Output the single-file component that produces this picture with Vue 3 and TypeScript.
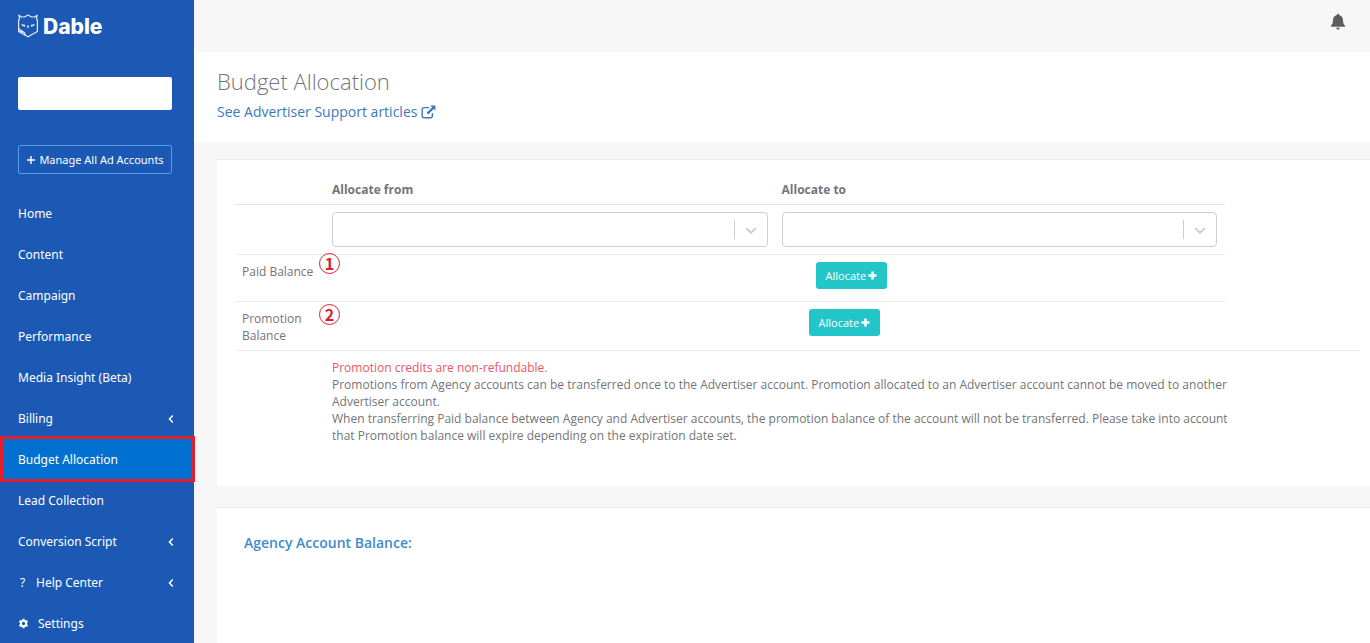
<script setup lang="ts">
import { ref } from 'vue'

interface NavItem {
  label: string
  icon?: 'help' | 'gear'
  expandable?: boolean
}

const navItems: NavItem[] = [
  { label: 'Home' },
  { label: 'Content' },
  { label: 'Campaign' },
  { label: 'Performance' },
  { label: 'Media Insight (Beta)' },
  { label: 'Billing', expandable: true },
  { label: 'Budget Allocation' },
  { label: 'Lead Collection' },
  { label: 'Conversion Script', expandable: true },
  { label: 'Help Center', icon: 'help', expandable: true },
  { label: 'Settings', icon: 'gear' },
]

const active = ref('Budget Allocation')
const account = ref('')
const from = ref('')
const to = ref('')
</script>

<template>
  <div class="layout">
    <aside class="sidebar">
      <a class="brand" href="#">
        <svg class="owl" viewBox="0 0 22 26" aria-hidden="true">
          <path d="M1.8 2.2 L4.6 4 H7.4 L11 2 L14.6 4 H17.4 L20.2 2.2 L19.4 5.2 L20.4 7.4 V18.4 L11 23.8 L1.6 18.4 V7.4 L2.6 5.2 Z" />
          <path d="M1.8 16 L7.4 19.4 L8.4 22.2 M1.8 18.4 L7.4 19.4" />
          <path class="face" d="M5 11.2 Q5.6 13 8.2 12.6 M17 11.2 Q16.4 13 13.8 12.6 M11 12.6 V14.8" />
        </svg>
        <span>Dable</span>
      </a>
      <input v-model="account" class="account" type="text" aria-label="Ad account" />
      <button class="manage" type="button">
        <svg viewBox="0 0 10 10" aria-hidden="true"><path d="M5 1V9M1 5H9" /></svg>
        Manage All Ad Accounts
      </button>
      <nav>
        <a
          v-for="item in navItems"
          :key="item.label"
          href="#"
          class="nav-item"
          :class="{ active: item.label === active }"
          @click.prevent="active = item.label"
        >
          <span v-if="item.icon === 'help'" class="lead">?</span>
          <svg v-if="item.icon === 'gear'" class="gear" viewBox="0 0 12 12" aria-hidden="true">
            <path
              fill-rule="evenodd"
              d="M4.9 .7H7.1L7.4 2.1L8.4 2.7L9.8 2.2L10.9 4.1L9.9 5.1V6.9L10.9 7.9L9.8 9.8L8.4 9.3L7.4 9.9L7.1 11.3H4.9L4.6 9.9L3.6 9.3L2.2 9.8L1.1 7.9L2.1 6.9V5.1L1.1 4.1L2.2 2.2L3.6 2.7L4.6 2.1ZM6 4.2A1.8 1.8 0 1 0 6 7.8A1.8 1.8 0 1 0 6 4.2Z"
            />
          </svg>
          <span>{{ item.label }}</span>
          <svg v-if="item.expandable" class="caret" viewBox="0 0 6 10" aria-hidden="true">
            <path d="M4.8 1.6 L1.5 5 L4.8 8.4" />
          </svg>
        </a>
      </nav>
    </aside>

    <main class="main">
      <header class="topbar">
        <button class="bell" type="button" aria-label="Notifications">
          <svg viewBox="0 0 16 18" aria-hidden="true">
            <path d="M8 .8C8.7 .8 9.1 1.3 9.1 2C11.5 2.6 12.9 4.6 13 7C13.1 10 13.5 11.2 15 12.6V13.8H1V12.6C2.5 11.2 2.9 10 3 7C3.1 4.6 4.5 2.6 6.9 2C6.9 1.3 7.3 .8 8 .8ZM6.2 14.8H9.8C9.7 16 9.1 16.6 8 16.6C6.9 16.6 6.3 16 6.2 14.8Z" />
          </svg>
        </button>
      </header>

      <section class="heading">
        <h1>Budget Allocation</h1>
        <a href="#">
          See Advertiser Support articles
          <svg viewBox="0 0 15 14" aria-hidden="true">
            <path class="box" d="M8.2 2.6H3.2Q1.2 2.6 1.2 4.6V10.8Q1.2 12.8 3.2 12.8H9.4Q11.4 12.8 11.4 10.8V8" />
            <path class="arrow" d="M9.2 .4H14.4V5.6L12.7 3.9L7.2 9.4L5.6 7.8L11.1 2.3Z" />
          </svg>
        </a>
      </section>

      <div class="panels">
        <section class="card">
          <table>
            <thead>
              <tr>
                <th class="label-col"></th>
                <th scope="col"><label for="from">Allocate from</label></th>
                <th scope="col"><label for="to">Allocate to</label></th>
              </tr>
            </thead>
            <tbody>
              <tr class="pick-row">
                <td></td>
                <td>
                  <div class="picker">
                    <select id="from" v-model="from"><option value=""></option></select>
                    <svg viewBox="0 0 12 8" aria-hidden="true"><path d="M1.2 1.2L6 5.8L10.8 1.2" /></svg>
                  </div>
                </td>
                <td>
                  <div class="picker">
                    <select id="to" v-model="to"><option value=""></option></select>
                    <svg viewBox="0 0 12 8" aria-hidden="true"><path d="M1.2 1.2L6 5.8L10.8 1.2" /></svg>
                  </div>
                </td>
              </tr>
              <tr class="balance-row">
                <th scope="row">Paid Balance<span class="mark">1</span></th>
                <td></td>
                <td class="paid">
                  <button class="allocate" type="button">
                    Allocate
                    <svg viewBox="0 0 10 10" aria-hidden="true"><path d="M5 .5V9.5M.5 5H9.5" /></svg>
                  </button>
                </td>
              </tr>
              <tr class="balance-row">
                <th scope="row">Promotion Balance<span class="mark low">2</span></th>
                <td></td>
                <td class="promo">
                  <button class="allocate" type="button">
                    Allocate
                    <svg viewBox="0 0 10 10" aria-hidden="true"><path d="M5 .5V9.5M.5 5H9.5" /></svg>
                  </button>
                </td>
              </tr>
            </tbody>
          </table>
          <div class="notes">
            <p class="warn">Promotion credits are non-refundable.</p>
            <p>Promotions from Agency accounts can be transferred once to the Advertiser account. Promotion allocated to an Advertiser account cannot be moved to another Advertiser account.</p>
            <p>When transferring Paid balance between Agency and Advertiser accounts, the promotion balance of the account will not be transferred. Please take into account that Promotion balance will expire depending on the expiration date set.</p>
          </div>
        </section>

        <section class="card agency">
          <h2>Agency Account Balance:</h2>
        </section>
      </div>
    </main>
  </div>
</template>

<style>
body {
  margin: 0;
}
</style>

<style scoped>
.layout {
  display: flex;
  height: 100vh;
  overflow: hidden;
  font-family: "Open Sans", "Noto Sans", sans-serif;
  font-size: 12px;
  color: #737577;
  background: #f7f7f7;
}
.layout * {
  box-sizing: border-box;
}
a {
  text-decoration: none;
}
button {
  font: inherit;
  cursor: pointer;
}

.sidebar {
  flex: none;
  width: 194px;
  background: #1b59b5;
}
.brand {
  display: flex;
  align-items: center;
  gap: 4px;
  height: 52px;
  padding: 0 17px;
  color: #fff;
  font-family: Inter, "Open Sans", sans-serif;
  font-size: 21px;
  font-weight: 800;
}
.owl {
  width: 22px;
  height: 26px;
  fill: none;
  stroke: #e4edfa;
  stroke-width: 1.2;
  stroke-linejoin: round;
}
.face {
  stroke-width: 1.6;
}
.account {
  display: block;
  width: calc(100% - 40px);
  height: 33px;
  margin: 25px 22px 35px 18px;
  border: 0;
  border-radius: 2px;
  background: #fff;
}
.manage {
  display: flex;
  align-items: center;
  justify-content: center;
  gap: 3px;
  width: calc(100% - 40px);
  height: 29px;
  margin: 0 22px 19px 18px;
  padding: 0;
  border: 1px solid #5c9aed;
  border-radius: 2px;
  background: transparent;
  color: #fff;
  font-family: "Noto Sans", sans-serif;
  font-size: 11px;
  white-space: nowrap;
}
.manage svg {
  width: 10px;
  height: 10px;
  fill: none;
  stroke: #fff;
  stroke-width: 1.4;
}
.nav-item {
  position: relative;
  display: flex;
  align-items: center;
  height: 41px;
  padding: 0 20px 0 18px;
  color: #fff;
  font-family: "Noto Sans", sans-serif;
  font-size: 12px;
}
.nav-item.active {
  background: #0270d0;
}
.nav-item.active::after {
  content: "";
  position: absolute;
  inset: -3px -1px -2px 0;
  border: 3px solid #e0202c;
}
.lead {
  width: 18px;
  padding-left: 2px;
}
.gear {
  width: 11px;
  height: 11px;
  margin-right: 9px;
  fill: #fff;
}
.caret {
  width: 6px;
  height: 10px;
  margin-left: auto;
  fill: none;
  stroke: #fff;
  stroke-width: 1.5;
}

.main {
  flex: 1;
  min-width: 0;
}
.topbar {
  display: flex;
  justify-content: flex-end;
  align-items: flex-start;
  height: 52px;
  padding: 13px 24px;
}
.bell {
  padding: 0;
  border: 0;
  background: none;
  line-height: 0;
}
.bell svg {
  width: 16px;
  height: 18px;
  fill: #5c5d5f;
}
.heading {
  height: 90px;
  padding: 13px 23px;
  background: #fff;
}
.heading h1 {
  margin: 0 0 5px;
  font-size: 22px;
  line-height: 32px;
  font-weight: 300;
}
.heading a {
  display: flex;
  align-items: center;
  gap: 4px;
  font-size: 14px;
  line-height: 20px;
  color: #4179b8;
}
.heading a svg {
  width: 15px;
  height: 14px;
}
.box {
  fill: none;
  stroke: #4179b8;
  stroke-width: 1.4;
}
.arrow {
  fill: #4179b8;
}

.panels {
  display: flex;
  flex-direction: column;
  gap: 21px;
  padding: 17px 0 0 23px;
}
.card {
  padding: 15px 10px 42px 19px;
  border-top: 1px solid #ebebec;
  background: #fff;
}
table {
  width: 88%;
  border-collapse: separate;
  border-spacing: 0;
  table-layout: fixed;
}
th,
td {
  padding: 6px 8px 6px 6px;
  border-bottom: 1px solid #ebebec;
  text-align: left;
  vertical-align: top;
  line-height: 17px;
}
thead th {
  border-bottom: 1px solid #e2e2e3;
}
tbody tr:last-child > * {
  border-bottom: 0;
}
.label-col {
  width: 90px;
}
.picker {
  position: relative;
}
.pick-row td {
  padding-top: 7px;
  padding-bottom: 7px;
}
.picker select {
  display: block;
  width: 100%;
  height: 35px;
  padding: 0 40px 0 8px;
  appearance: none;
  border: 1px solid #cfcfcf;
  border-radius: 4px;
  background: #fff;
  font: inherit;
}
.picker::after {
  content: "";
  position: absolute;
  top: 8px;
  bottom: 8px;
  right: 33px;
  width: 1px;
  background: #ccc;
  pointer-events: none;
}
.picker svg {
  position: absolute;
  right: 11px;
  top: 15px;
  width: 12px;
  height: 8px;
  fill: none;
  stroke: #c8c8c8;
  stroke-width: 1.8;
  pointer-events: none;
}
.balance-row th {
  position: relative;
  font-weight: 400;
  padding: 8px 0 6px 6px;
}
.balance-row td {
  padding-top: 7px;
  padding-bottom: 12px;
}
.balance-row .paid {
  padding-left: 40px;
}
.balance-row .promo {
  padding-left: 33px;
}
.mark {
  position: absolute;
  left: 83px;
  top: -2px;
  width: 21px;
  height: 21px;
  border: 1px solid #d8232e;
  border-radius: 50%;
  color: #d8232e;
  font-family: "Noto Sans CJK KR", sans-serif;
  font-size: 16px;
  font-weight: 700;
  line-height: 18px;
  text-align: center;
}
.mark.low {
  top: 2px;
}
.allocate {
  display: flex;
  align-items: center;
  gap: 2px;
  height: 27px;
  padding: 0 10px;
  border: 0;
  border-radius: 3px;
  background: #23c6c8;
  color: #fff;
  font-size: 11px;
  white-space: nowrap;
}
.allocate svg {
  width: 9px;
  height: 9px;
  fill: none;
  stroke: #fff;
  stroke-width: 2.8;
}
.notes {
  padding: 8px 126px 0 96px;
  border-top: 1px solid #ebebec;
  line-height: 17px;
}
.notes p {
  margin: 0;
}
.notes .warn {
  color: #ed5565;
}
.agency {
  min-height: 160px;
  padding: 23px 27px;
}
.agency h2 {
  margin: 0;
  font-size: 14px;
  line-height: 24px;
  font-weight: 600;
  color: #428bca;
}
</style>
